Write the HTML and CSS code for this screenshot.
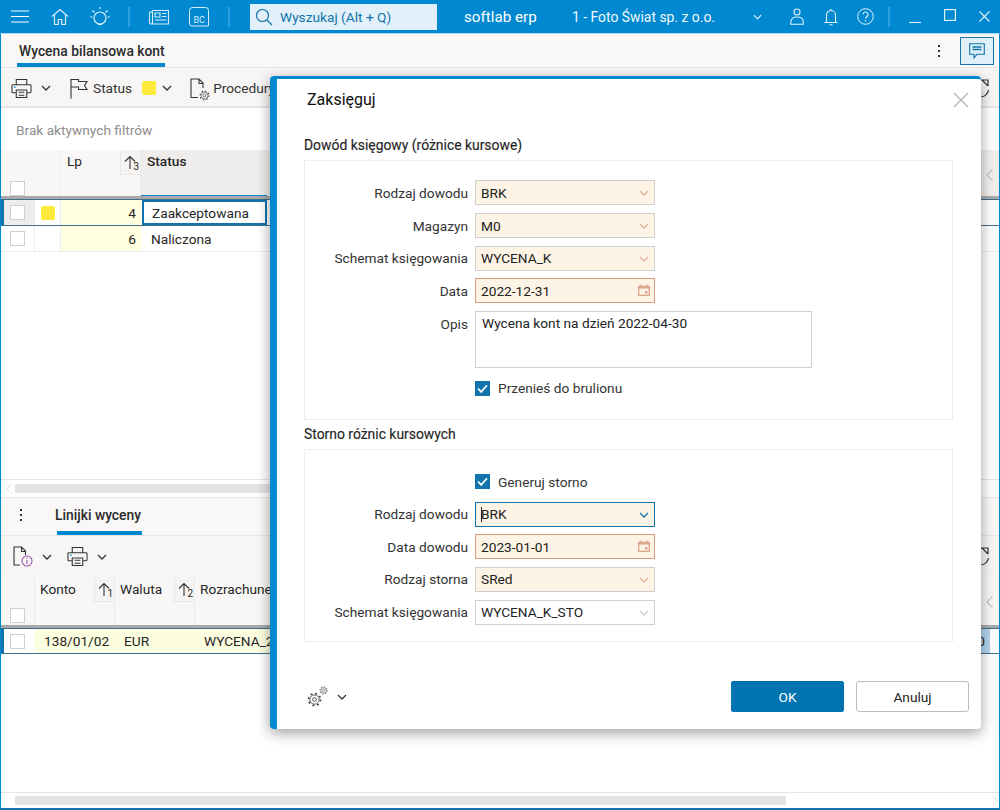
FILE: index.html
```html
<!DOCTYPE html>
<html lang="pl">
<head>
<meta charset="utf-8">
<title>Wycena bilansowa kont</title>
<link rel="stylesheet" href="styles.css">
</head>
<body>
<svg class="defs" width="0" height="0" aria-hidden="true">
  <defs>
    <symbol id="chev" viewBox="0 0 10 6"><path d="M1 1l4 4 4-4" fill="none" stroke="currentColor" stroke-width="1.3"/></symbol>
    <symbol id="printer" viewBox="0 0 22 22"><path d="M5.500 7V1.500h11V7M5.500 15.500H2a1 1 0 0 1-1-1V8a1 1 0 0 1 1-1h18a1 1 0 0 1 1 1v6.500a1 1 0 0 1-1 1h-3.500M5.500 12.500h11v8h-11zM8 15h6M8 18h6" fill="none" stroke="#333" stroke-width="1.100"/><path d="M3 9.500h2" stroke="#0089d0" stroke-width="1.200"/></symbol>
    <symbol id="cal" viewBox="0 0 12 12"><path d="M.7 2.500h10.600v8.800H.7z" fill="none" stroke="#d9a58c" stroke-width="1.300"/><rect x=".7" y="2" width="10.600" height="2.500" fill="#d9a58c"/><path d="M3 .5v2M9 .5v2" stroke="#d9a58c" stroke-width="1.300"/><rect x="7" y="7" width="2.500" height="2.500" fill="#d9a58c"/></symbol>
    <symbol id="check" viewBox="0 0 15 15"><rect width="15" height="15" fill="#1274ac"/><path d="M3 7.500l3.200 3.400L12 4.200" fill="none" stroke="#fff" stroke-width="1.700"/></symbol>
    <symbol id="up" viewBox="0 0 12 14"><path d="M6 14V1.500M1 6.500l5-5 5 5" fill="none" stroke="#333" stroke-width="1.100"/></symbol>
    <symbol id="refresh" viewBox="0 0 20 22"><path d="M11 3h7v6M12 3l6 6" fill="none" stroke="#333" stroke-width="1.200"/><path d="M18.500 13a9 9 0 0 1-7 7" fill="none" stroke="#333" stroke-width="1.200"/></symbol>
    <symbol id="gear" viewBox="0 0 16 16"><circle cx="8" cy="8" r="2" fill="none" stroke="#333" stroke-width=".9"/><circle cx="8" cy="8" r="5" fill="none" stroke="#333" stroke-width=".9"/><circle cx="8" cy="8" r="6.500" fill="none" stroke="#333" stroke-width="1.500" stroke-dasharray="2 3.100"/></symbol>
  </defs>
</svg>

<div class="app">
  <header class="titlebar">
    <div class="tb-btn"><svg width="18" height="13" viewBox="0 0 18 13"><path d="M0 1h18M0 6.500h18M0 12h18" stroke="#fff" stroke-width="1.200"/></svg></div>
    <div class="tb-btn"><svg width="18" height="18" viewBox="0 0 18 18"><path d="M1 8.500L9 1.500l8 7M3.500 7v9.500h3.800v-5h3.400v5h3.800V7" fill="none" stroke="#d8eefa" stroke-width="1.200"/></svg></div>
    <div class="tb-btn"><svg width="22" height="22" viewBox="0 0 22 22"><circle cx="11" cy="12" r="6" fill="none" stroke="#d8eefa" stroke-width="1.200"/><path d="M9 18.500h4M1 11h2.500M18.500 11H21M3.500 4.500l2 2M18.500 4.500l-2 2M11 1v2" stroke="#d8eefa" stroke-width="1.200"/></svg></div>
    <div class="tb-sep tb-sep-a"></div>
    <div class="tb-btn"><svg width="20" height="16" viewBox="0 0 20 16"><path d="M3.500 1.500h16v13.500H2.500a2 2 0 0 1-2-2V3.500l3 -1M3.500 1.500V15" fill="none" stroke="#d8eefa" stroke-width="1.100"/><path d="M6 4h5v4H6zM13 4.500h4.500M13 7.500h4.500M6 11h11.500" fill="none" stroke="#d8eefa" stroke-width="1.200"/></svg></div>
    <div class="tb-btn"><svg width="20" height="20" viewBox="0 0 20 20"><path d="M3.500.5h13a3 3 0 0 1 3 3v15.500H3a2.500 2.500 0 0 1-2.500-2.500V3.500a3 3 0 0 1 3-3z" fill="none" stroke="#d8eefa" stroke-width="1"/><text x="4.500" y="15.500" class="bc-text">BC</text></svg></div>
    <div class="tb-sep tb-sep-b"></div>
    <div class="search">
      <svg width="18" height="18" viewBox="0 0 18 18"><circle cx="7.500" cy="7.500" r="6" fill="none" stroke="#1274ac" stroke-width="1.200"/><path d="M12 12l5 5" stroke="#1274ac" stroke-width="1.300"/></svg>
      <span>Wyszukaj (Alt + Q)</span>
    </div>
    <div class="brand">softlab erp</div>
    <div class="company">1 - Foto Świat sp. z o.o.</div>
    <div class="tb-chev"><svg width="9" height="6"><use href="#chev"/></svg></div>
    <div class="tb-btn tb-narrow"><svg width="14" height="17" viewBox="0 0 14 17"><circle cx="7" cy="4" r="3" fill="none" stroke="#e2f2fb" stroke-width="1.100"/><path d="M.8 16.300V14c0-3 2.500-5 6.200-5s6.200 2 6.200 5v2.300z" fill="none" stroke="#e2f2fb" stroke-width="1.100"/></svg></div>
    <div class="tb-btn tb-narrow"><svg width="14" height="18" viewBox="0 0 14 18"><path d="M.5 14.500h13M2.500 14.500V7a4.500 4.500 0 0 1 9 0v7.500M5.500 16.800h3M7 1v1.500" fill="none" stroke="#e2f2fb" stroke-width="1.100"/></svg></div>
    <div class="tb-btn tb-narrow"><svg width="17" height="17" viewBox="0 0 17 17"><circle cx="8.500" cy="8.500" r="7.800" fill="none" stroke="#e2f2fb" stroke-width="1"/><path d="M6 6.500a2.500 2.500 0 1 1 3.700 2.200c-.8.500-1.200 1-1.200 2" fill="none" stroke="#e2f2fb" stroke-width="1.100"/><circle cx="8.500" cy="12.800" r=".8" fill="#e2f2fb"/></svg></div>
    <div class="tb-sep tb-sep-c"></div>
    <div class="win-btn"><svg width="12" height="12" viewBox="0 0 12 12"><path d="M0 11.500h12" stroke="#e2f2fb" stroke-width="1.100"/></svg></div>
    <div class="win-btn win-max"><svg width="12" height="12" viewBox="0 0 12 12"><rect x=".6" y=".6" width="10.800" height="10.800" fill="none" stroke="#e2f2fb" stroke-width="1.200"/></svg></div>
    <div class="win-btn"><svg width="11" height="11" viewBox="0 0 11 11"><path d="M.5.500l10 10M10.500.500l-10 10" stroke="#e2f2fb" stroke-width="1.100"/></svg></div>
  </header>

  <main class="body">
    <div class="tabbar">
      <div class="tab tab-main">Wycena bilansowa kont</div>
      <div class="dots dots-top"><i></i><i></i><i></i></div>
      <div class="chat-btn"><svg width="16" height="16" viewBox="0 0 16 16"><path d="M.7.700h14.600v10.600H8l-3 3.500v-3.500H.7z" fill="none" stroke="#1274ac" stroke-width="1.100"/><path d="M3.500 4h9M3.500 6.500h9" stroke="#1274ac" stroke-width="1.300"/></svg></div>
    </div>

    <div class="toolbar toolbar-top">
      <svg class="ico-print" width="21" height="21"><use href="#printer"/></svg>
      <svg class="chev-dark chev-a" width="10" height="6"><use href="#chev"/></svg>
      <svg class="ico-flag" width="18" height="21" viewBox="0 0 18 21"><path d="M1 20.500V1M1 1.500h7.500v2H17l-2.500 4 2.500 4H8.500v-2.500H1" fill="none" stroke="#333" stroke-width="1.100"/></svg>
      <span class="tool-label">Status</span>
      <span class="swatch swatch-tool"></span>
      <svg class="chev-dark chev-b" width="10" height="6"><use href="#chev"/></svg>
      <span class="ico-wrap">
        <svg width="20" height="21" viewBox="0 0 20 21"><path d="M8 19.500H1V1h8l4 4v5M9 1v4.500h4" fill="none" stroke="#333" stroke-width="1.100"/></svg>
        <svg class="ico-wrap-gear" width="11" height="11"><use href="#gear"/></svg>
      </span>
      <span class="tool-label tool-proc">Procedury</span>
      <svg class="ico-refresh" width="20" height="22"><use href="#refresh"/></svg>
    </div>

    <div class="filters">Brak aktywnych filtrów</div>

    <div class="ghead ghead-top">
      <div class="hc hc-check"><span class="cb"></span></div>
      <div class="hc hc-flag"></div>
      <div class="hc hc-lp"><span class="hc-title">Lp</span><span class="sort"><svg width="12" height="14"><use href="#up"/></svg><sub>3</sub></span></div>
      <div class="hc hc-status">Status</div>
      <svg class="side-chev" width="7" height="12" viewBox="0 0 7 12"><path d="M6.500 .5L1 6l5.500 5.500" fill="none" stroke="#c4c4c4" stroke-width="1.100"/></svg>
    </div>
    <div class="row row-active">
      <div class="c c-check c-check-on"><span class="cb"></span></div>
      <div class="c c-flag"><span class="swatch"></span></div>
      <div class="c c-lp">4</div>
      <div class="c c-status c-focus">Zaakceptowana</div>
    </div>
    <div class="row row-plain">
      <div class="c c-check"><span class="cb"></span></div>
      <div class="c c-flag"></div>
      <div class="c c-lp">6</div>
      <div class="c c-status">Naliczona</div>
    </div>
    <div class="grid-fill"></div>
    <div class="hscroll hscroll-top">
      <svg width="6" height="11" viewBox="0 0 6 11"><path d="M5.500 .5L.7 5.500l4.800 5" fill="none" stroke="#ddd"/></svg>
      <div class="thumb"></div>
    </div>

    <div class="tabbar tabbar-lower">
      <div class="dots dots-lower"><i></i><i></i><i></i></div>
      <div class="tab tab-lower">Linijki wyceny</div>
    </div>
    <div class="toolbar toolbar-lower">
      <svg class="ico-docinfo" width="20" height="21" viewBox="0 0 20 21"><path d="M7 19H1V1h7.500l4 4v4M8.500 1v4.500h4" fill="none" stroke="#333" stroke-width="1.100"/><circle cx="14" cy="15" r="5" fill="none" stroke="#9b59b6" stroke-width="1.100"/><path d="M14 14v4M14 11.800v1.200" stroke="#9b59b6" stroke-width="1.100"/></svg>
      <svg class="chev-dark chev-c" width="10" height="6"><use href="#chev"/></svg>
      <svg class="ico-print2" width="21" height="21"><use href="#printer"/></svg>
      <svg class="chev-dark chev-d" width="10" height="6"><use href="#chev"/></svg>
      <svg class="ico-refresh" width="20" height="22"><use href="#refresh"/></svg>
    </div>
    <div class="ghead ghead-lower">
      <div class="hc hc-check"><span class="cb"></span></div>
      <div class="hc hc-wide"><span class="hc-title">Konto</span><span class="sort"><svg width="12" height="14"><use href="#up"/></svg><sub>1</sub></span></div>
      <div class="hc hc-wide"><span class="hc-title">Waluta</span><span class="sort"><svg width="12" height="14"><use href="#up"/></svg><sub>2</sub></span></div>
      <div class="hc hc-rest"><span class="hc-title">Rozrachunek</span></div>
      <svg class="side-chev" width="7" height="12" viewBox="0 0 7 12"><path d="M6.500 .5L1 6l5.500 5.500" fill="none" stroke="#c4c4c4" stroke-width="1.100"/></svg>
    </div>
    <div class="row row-lower">
      <div class="c c-check"><span class="cb"></span></div>
      <div class="c c-konto">138/01/02</div>
      <div class="c c-waluta">EUR</div>
      <div class="c c-roz">WYCENA_2</div>
      <div class="c c-blue">0</div>
      <div class="c c-end"></div>
    </div>
    <div class="spacer"></div>
    <div class="hscroll hscroll-bottom">
      <div class="thumb"></div>
      <svg width="6" height="11" viewBox="0 0 6 11"><path d="M.5 .5l4.800 5-4.800 5" fill="none" stroke="#ddd"/></svg>
    </div>
  </main>

  <section class="dialog">
    <div class="dlg-head">
      <h1>Zaksięguj</h1>
      <svg width="16" height="16" viewBox="0 0 16 16"><path d="M1 1l14 14M15 1L1 15" stroke="#bdbdbd" stroke-width="1.700"/></svg>
    </div>
    <div class="dlg-body">
      <h2 class="sec-title">Dowód księgowy (różnice kursowe)</h2>
      <div class="sec sec-one">
        <label>Rodzaj dowodu</label>
        <div class="field">BRK<svg class="f-chev" width="10" height="6"><use href="#chev"/></svg></div>
        <label>Magazyn</label>
        <div class="field">M0<svg class="f-chev" width="10" height="6"><use href="#chev"/></svg></div>
        <label>Schemat księgowania</label>
        <div class="field">WYCENA_K<svg class="f-chev" width="10" height="6"><use href="#chev"/></svg></div>
        <label>Data</label>
        <div class="field field-date">2022-12-31<svg class="f-cal" width="12" height="12"><use href="#cal"/></svg></div>
        <label class="label-top">Opis</label>
        <div class="area">Wycena kont na dzień 2022-04-30</div>
        <div class="check-row check-one"><svg width="15" height="15"><use href="#check"/></svg><span>Przenieś do brulionu</span></div>
      </div>
      <h2 class="sec-title sec-title-2">Storno różnic kursowych</h2>
      <div class="sec sec-two">
        <div class="check-row"><svg width="15" height="15"><use href="#check"/></svg><span>Generuj storno</span></div>
        <label>Rodzaj dowodu</label>
        <div class="field field-focus"><i class="caret"></i>BRK<svg class="f-chev" width="10" height="6"><use href="#chev"/></svg></div>
        <label>Data dowodu</label>
        <div class="field field-date">2023-01-01<svg class="f-cal" width="12" height="12"><use href="#cal"/></svg></div>
        <label>Rodzaj storna</label>
        <div class="field">SRed<svg class="f-chev" width="10" height="6"><use href="#chev"/></svg></div>
        <label>Schemat księgowania</label>
        <div class="field field-white">WYCENA_K_STO<svg class="f-chev" width="10" height="6"><use href="#chev"/></svg></div>
      </div>
    </div>
    <div class="dlg-foot">
      <span class="ico-gears">
        <svg class="gear-big" width="15" height="15"><use href="#gear"/></svg>
        <svg class="gear-small" width="9" height="9"><use href="#gear"/></svg>
      </span>
      <svg class="chev-dark" width="10" height="6"><use href="#chev"/></svg>
      <button class="btn btn-ok" type="button">OK</button>
      <button class="btn btn-cancel" type="button">Anuluj</button>
    </div>
  </section>
</div>
</body>
</html>
```
FILE: styles.css
```css
* { box-sizing: border-box; }
html, body { margin: 0; padding: 0; }
body { font-family: Roboto, "Liberation Sans", sans-serif; font-size: 13.7px; color: #262626; background: #fff; overflow: hidden; }
.defs { position: absolute; }
.app { width: 1000px; height: 810px; display: flex; flex-direction: column; position: relative; overflow: hidden; }

/* title bar */
.titlebar { height: 33px; flex: none; background: #0089d0; color: #fff; display: flex; align-items: center; }
.tb-btn { width: 40px; height: 33px; display: flex; align-items: center; justify-content: center; flex: none; }
.tb-narrow { width: 34px; }
.tb-sep { width: 2px; height: 20px; background: #2ea0db; flex: none; }
.tb-sep-a { margin: 0 9px 0 8px; }
.tb-sep-b { margin: 0 20px 0 9px; }
.tb-sep-c { margin: 0 8px 0 6px; }
.bc-text { font-size: 9px; fill: #d8eefa; font-family: Roboto, sans-serif; }
.search { width: 187px; height: 26px; background: #e1f0f9; color: #1274ac; display: flex; align-items: center; gap: 7px; padding-left: 5px; flex: none; }
.brand { width: 108px; margin-left: 27px; font-size: 15.2px; flex: none; }
.company { width: 165px; font-size: 13.9px; flex: none; color: #eef8fd; }
.tb-chev { width: 40px; display: flex; justify-content: center; margin-right: 3px; flex: none; color: #e2f2fb; }
.win-btn { width: 34px; height: 33px; display: flex; align-items: center; justify-content: center; flex: none; }
.win-max { width: 35px; padding-bottom: 3px; }

/* main panels */
.body { flex: 1; min-height: 0; display: flex; flex-direction: column; border: 1px solid #0089d0; border-top-color: #a9d8f0; border-bottom-width: 2px; border-bottom-color: #1274ac; }
.tabbar { height: 34px; flex: none; background: #f9f8f6; border-bottom: 1px solid #e6e6e6; display: flex; align-items: stretch; position: relative; }
.tab { font-weight: 500; font-size: 13.85px; color: #2b2b2b; display: flex; align-items: center; border-bottom: 4px solid #0089d0; padding-top: 5px; white-space: nowrap; }
.tab-main { margin-left: 16px; width: 148px; height: 33px; padding-left: 2px; }
.dots { display: flex; flex-direction: column; gap: 3px; align-self: center; flex: none; }
.dots i { width: 2px; height: 2px; background: #333; display: block; }
.dots-top { margin-left: auto; margin-right: 20px; }
.chat-btn { width: 34px; height: 28px; background: #dff0f9; border: 1px solid #1b75a8; margin: 3px 5px 0 0; display: flex; align-items: center; justify-content: center; }

.toolbar { height: 40px; flex: none; background: #f7f6f4; display: flex; align-items: center; position: relative; border-bottom: 2px solid #e6e6e6; }
.toolbar-top { color: #333; padding-top: 2px; }
.ico-print { margin-left: 10px; flex: none; }
.chev-dark { color: #333; flex: none; }
.chev-a { margin-left: 9px; }
.ico-flag { margin-left: 19px; flex: none; }
.toolbar-top .tool-label { margin-left: 5px; }
.swatch { width: 14px; height: 14px; border-radius: 2px; background: #ffe93b; display: block; flex: none; }
.toolbar-top .swatch-tool { margin-left: 10px; }
.chev-b { margin-left: 6px; }
.ico-wrap { margin-left: 18px; width: 20px; height: 21px; position: relative; flex: none; display: block; }
.ico-wrap-gear { position: absolute; left: 9px; top: 12px; background: #f7f6f4; border-radius: 50%; }
.toolbar-top .tool-proc { margin-left: 3px; }
.ico-refresh { position: absolute; right: 9px; top: 9px; }

.filters { height: 42px; flex: none; display: flex; align-items: center; padding: 2px 0 0 15px; color: #8d8d8d; background: #fff; }

.ghead { flex: none; display: flex; background: #f8f7f5; position: relative; border-bottom: 3px solid #a9a9a9; }
.ghead-top { height: 49px; background: #f0efed; }
.hc { height: 100%; border-right: 1px solid #ececec; position: relative; flex: none; background: #f8f7f5; }
.hc-check { width: 34px; }
.hc-check .cb { position: absolute; left: 9px; bottom: 0; }
.ghead-top .hc-check { border-right: 0; }
.hc-flag { width: 26px; }
.hc-lp { width: 80px; }
.hc-title { position: absolute; left: 6px; top: 3px; }
.hc-status { width: 126px; background: #eeedec; font-weight: 500; padding: 3px 0 0 6px; border-bottom: 1px solid #0089d0; border-right: 0; }
.sort { position: absolute; right: 0; top: 0; width: 20px; height: 25px; background: #f5f4f2; border-left: 1px solid #e8e8e8; border-bottom: 1px solid #e8e8e8; padding: 5px 0 0 3px; display: flex; }
.sort sub { font-size: 10px; line-height: 1; position: absolute; right: 1px; bottom: 2px; }
.side-chev { position: absolute; right: 6px; top: 19px; }
.cb { width: 15px; height: 15px; border: 1px solid #cfcfcf; background: #fff; display: block; }

.row { height: 26px; flex: none; display: flex; align-items: stretch; background: #fff; }
.row-active { height: 27px; border-top: 1px solid #3f6f8c; border-bottom: 1px solid #3f6f8c; border-left: 3px solid #1274ac; }
.row-plain { border-bottom: 1px solid #ececec; }
.c { display: flex; align-items: center; flex: none; }
.c-check { width: 34px; padding-left: 9px; border-right: 1px solid #ececec; }
.row-active .c-check { width: 31px; padding-left: 6px; }
.c-check-on { background: #eeedec; }
.c-flag { width: 26px; padding-left: 6px; border-right: 1px solid #ececec; }
.c-lp { width: 80px; background: #ffffe0; justify-content: flex-end; padding-right: 5px; }
.c-status { width: 126px; padding-left: 10px; }
.c-focus { border: 2px solid #1274ac; padding-left: 8px; margin-left: 1px; width: 125px; }

.grid-fill { height: 227px; flex: none; }
.spacer { flex: 1; min-height: 0; }
.hscroll { height: 19px; flex: none; display: flex; align-items: center; background: #fff; border-top: 1px solid #e6e6e6; border-bottom: 1px solid #e6e6e6; padding-left: 5px; gap: 3px; }
.hscroll .thumb { height: 9px; background: #e3e3e3; width: 920px; }
.hscroll-bottom { height: 16px; padding-left: 14px; border-bottom: 0; justify-content: space-between; padding-right: 1px; }
.hscroll-bottom .thumb { width: 771px; }

.tabbar-lower { height: 38px; }
.dots-lower { margin-left: 19px; margin-right: 35px; margin-top: -4px; }
.tab-lower { width: 85px; height: 37px; padding-top: 0; text-indent: -2px; }

.toolbar-lower { height: 41px; border-bottom: 0; }
.ico-docinfo { margin-left: 12px; flex: none; }
.chev-c { margin-left: 9px; }
.ico-print2 { margin-left: 15px; flex: none; }
.chev-d { margin-left: 9px; }

.ghead-lower { height: 51px; }
.ghead-lower .hc-title { left: 5px; top: 4px; }
.ghead-lower .hc-check .cb { bottom: 2px; }
.hc-wide { width: 80px; }
.hc-rest { flex: 1; border-right: 0; }
.row-lower { height: 26px; background: #fdfde0; border-top: 1px solid #3f6f8c; border-bottom: 1px solid #3f6f8c; border-left: 3px solid #1274ac; }
.row-lower .c-check { width: 31px; padding-left: 6px; background: #fff; border-right: 0; }
.c-konto { width: 80px; padding-left: 9px; }
.c-waluta { width: 80px; padding-left: 9px; }
.c-roz { width: 710px; padding-left: 9px; }
.c-blue { width: 40px; background: #b3d4ee; justify-content: flex-end; padding-right: 5px; margin-left: 45px; }
.c-end { flex: 1; background: #fff; }

/* dialog */
.dialog { position: absolute; left: 270px; top: 76px; width: 711px; height: 653px; background: #fff; border-left: 7px solid #0089d0; border-top: 3px solid #0089d0; border-radius: 4px; box-shadow: 0 4px 14px rgba(0, 0, 0, .38); display: flex; flex-direction: column; }
.dlg-head { height: 41px; flex: none; display: flex; align-items: center; justify-content: space-between; padding: 0 12px 0 30px; }
.dlg-head h1 { margin: 0; font-size: 16px; font-weight: 400; color: #111; }
.dlg-body { padding-left: 27px; width: 676px; flex: none; }
.sec-title { margin: 0; height: 40px; font-size: 13.9px; font-weight: 400; padding-top: 17px; color: #262626; -webkit-text-stroke: .15px #262626; }
.sec-title-2 { height: 29px; padding-top: 6px; }
.sec { width: 649px; border: 1px solid #eeeeee; display: grid; grid-template-columns: 163px 1fr; column-gap: 7px; row-gap: 7.670px; align-items: center; }
.sec-one { height: 260px; padding-top: 19.4px; align-content: start; }
.sec-two { height: 193px; padding-top: 24px; align-content: start; }
.sec label { text-align: right; color: #333; }
.sec .label-top { align-self: start; padding-top: 5px; }
.field { width: 180px; height: 25px; border: 1px solid #cfcfcf; background: #fdf4e5; padding-left: 5px; display: flex; align-items: center; justify-content: flex-start; position: relative; color: #222; }
.f-chev { position: absolute; right: 5px; top: 9px; color: #dfb19a; }
.f-cal { position: absolute; right: 4px; top: 5px; }
.field-date { border-color: #d99a80; }
.field-focus { border-color: #1274ac; }
.field-focus .f-chev { color: #1274ac; }
.field-white { background: #fff; }
.field-white .f-chev { color: #ccc; }
.caret { width: 1px; height: 15px; background: #222; position: absolute; left: 5px; top: 4px; }
.area { width: 337px; height: 57px; border: 1px solid #cfcfcf; padding: 2px 6px; background: #fff; color: #222; line-height: 18px; }
.check-row { grid-column: 2; display: flex; align-items: center; gap: 8px; height: 15px; color: #333; }
.check-one { margin-top: 5px; }
.sec-two .check-row { margin-bottom: 5px; }
.dlg-foot { flex: 1; display: flex; align-items: center; padding: 22px 12px 0 30px; }
.ico-gears { flex: none; margin-right: 9px; width: 21px; height: 21px; position: relative; display: block; }
.gear-big { position: absolute; left: 0; bottom: 0; }
.gear-small { position: absolute; right: 0; top: 0; }
.btn { height: 31px; width: 113px; font: 13.7px Roboto, sans-serif; border-radius: 2px; padding: 0; }
.btn-ok { margin-left: auto; background: #0073b0; color: #fff; border: 1px solid #0073b0; }
.btn-cancel { margin-left: 12px; background: #fff; color: #222; border: 1px solid #bcbcbc; border-radius: 3px; }
```
